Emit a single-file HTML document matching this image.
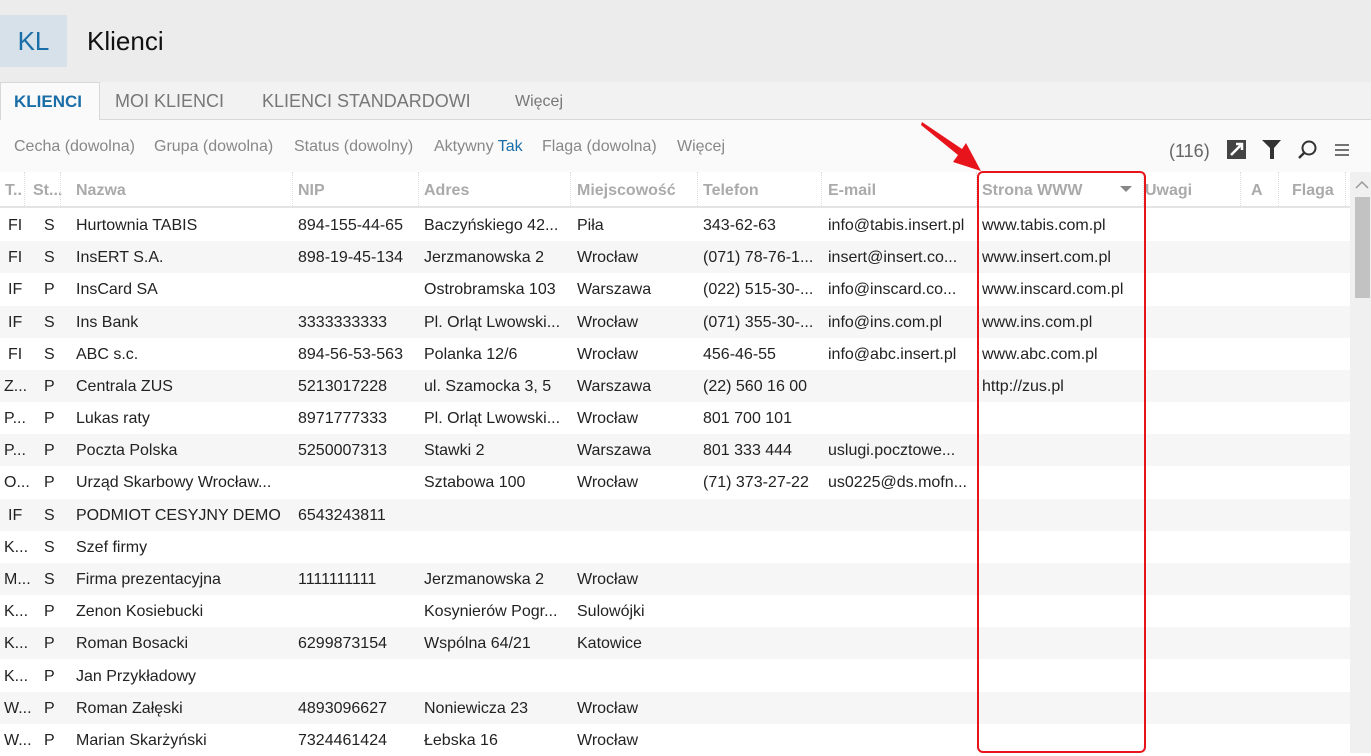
<!DOCTYPE html>
<html><head><meta charset="utf-8"><style>
body{margin:0;width:1371px;height:753px;overflow:hidden;background:#fff;font-family:"Liberation Sans",sans-serif;position:relative}
.top{position:absolute;left:0;top:0;width:1371px;height:82px;background:#ececec}
.kl{position:absolute;left:0;top:15px;width:67px;height:52px;background:#d7e1ea;color:#1a6ea8;font-size:26px;line-height:52px;text-align:center}
.title{position:absolute;left:87px;top:26px;font-size:26px;color:#111}
.tabs{position:absolute;left:0;top:82px;width:1371px;height:37px;background:#f2f2f2;border-bottom:1px solid #d8d8d8}
.tab{position:absolute;top:9px;font-size:18px;color:#777}
.tab.act{left:0;top:0;width:100px;height:38px;background:#fafafa;border:1px solid #d8d8d8;border-bottom:none;color:#1a6ea8;font-weight:bold;line-height:38px;padding-left:13px;box-sizing:border-box;font-size:17px}
.filt{position:absolute;left:0;top:120px;width:1371px;height:52px;background:#fafafa}
.filt span{position:absolute;top:18px;font-size:16px;color:#888}
.hdr{position:absolute;left:0;top:172px;width:1350px;height:34px;background:#fff;border-bottom:2px solid #e4e4e4}
.hdr div{position:absolute;top:10px;font-size:16px;color:#aaa;font-weight:bold}
.sep{position:absolute;top:172px;height:34px;border-left:1px dotted #ddd}
.row{position:absolute;left:0;width:1350px;height:32px}
.row.g{background:#f6f6f6}
.row div{position:absolute;top:8px;font-size:16px;color:#222;white-space:nowrap}
.sb{position:absolute;left:1350px;top:172px;width:21px;height:581px;background:#f0f0f0}
.thumb{position:absolute;left:1355px;top:197px;width:15px;height:101px;background:#c2c2c2}
.red{position:absolute;left:977px;top:171px;width:165px;height:578px;border:2px solid #e8141c;border-radius:6px}
</style></head><body>
<div class="top"><div class="kl">KL</div><div class="title">Klienci</div></div>
<div class="tabs">
<div class="tab act">KLIENCI</div>
<div class="tab" style="left:115px">MOI KLIENCI</div>
<div class="tab" style="left:262px">KLIENCI STANDARDOWI</div>
<div class="tab" style="left:515px;font-size:16px;top:11px">Więcej</div>
</div>
<div class="filt">
<span style="left:14px">Cecha (dowolna)</span>
<span style="left:154px">Grupa (dowolna)</span>
<span style="left:294px">Status (dowolny)</span>
<span style="left:434px">Aktywny <b style="font-weight:normal;color:#1a6ea8">Tak</b></span>
<span style="left:542px">Flaga (dowolna)</span>
<span style="left:677px">Więcej</span>
<span style="left:1169px;top:21px;font-size:18px;color:#666">(116)</span>
<svg style="position:absolute;left:1227px;top:20px" width="20" height="20"><rect x="0" y="0" width="19" height="19" fill="#444"/><path d="M4 15 L15 4 M9 4 H15 V10" stroke="#fff" stroke-width="2.5" fill="none"/></svg>
<svg style="position:absolute;left:1262px;top:20px" width="20" height="20"><path d="M0 0H19L12 8V19H8V8Z" fill="#333"/></svg>
<svg style="position:absolute;left:1297px;top:19px" width="22" height="22"><circle cx="12" cy="9" r="6.5" stroke="#333" stroke-width="2" fill="none"/><path d="M7.5 13.5L2 19" stroke="#333" stroke-width="2.5"/></svg>
<svg style="position:absolute;left:1335px;top:23px" width="16" height="14"><path d="M0 2H14M0 7H14M0 12H14" stroke="#444" stroke-width="1.6"/></svg>
</div>
<div class="hdr">
<div style="left:5px">T..</div><div style="left:33px">St...</div><div style="left:76px">Nazwa</div><div style="left:298px">NIP</div><div style="left:424px">Adres</div><div style="left:577px">Miejscowość</div><div style="left:703px">Telefon</div><div style="left:828px">E-mail</div><div style="left:982px">Strona WWW</div><div style="left:1145px">Uwagi</div><div style="left:1251px">A</div><div style="left:1292px">Flaga</div>
<svg style="position:absolute;left:1120px;top:14px" width="12" height="7"><path d="M0 0H12L6 6Z" fill="#888"/></svg>
</div>
<div class="sep" style="left:24px"></div><div class="sep" style="left:60px"></div><div class="sep" style="left:292px"></div><div class="sep" style="left:418px"></div><div class="sep" style="left:570px"></div><div class="sep" style="left:697px"></div><div class="sep" style="left:821px"></div><div class="sep" style="left:976px"></div><div class="sep" style="left:1143px"></div><div class="sep" style="left:1240px"></div><div class="sep" style="left:1278px"></div><div class="sep" style="left:1345px"></div>
<div class="row" style="top:209px"><div style="left:8px">FI</div><div style="left:44px">S</div><div style="left:76px">Hurtownia TABIS</div><div style="left:298px">894-155-44-65</div><div style="left:424px">Baczyńskiego 42...</div><div style="left:577px">Piła</div><div style="left:703px">343-62-63</div><div style="left:828px">info@tabis.insert.pl</div><div style="left:982px">www.tabis.com.pl</div></div>
<div class="row g" style="top:241px"><div style="left:8px">FI</div><div style="left:44px">S</div><div style="left:76px">InsERT S.A.</div><div style="left:298px">898-19-45-134</div><div style="left:424px">Jerzmanowska 2</div><div style="left:577px">Wrocław</div><div style="left:703px">(071) 78-76-1...</div><div style="left:828px">insert@insert.co...</div><div style="left:982px">www.insert.com.pl</div></div>
<div class="row" style="top:273px"><div style="left:8px">IF</div><div style="left:44px">P</div><div style="left:76px">InsCard SA</div><div style="left:424px">Ostrobramska 103</div><div style="left:577px">Warszawa</div><div style="left:703px">(022) 515-30-...</div><div style="left:828px">info@inscard.co...</div><div style="left:982px">www.inscard.com.pl</div></div>
<div class="row g" style="top:306px"><div style="left:8px">IF</div><div style="left:44px">S</div><div style="left:76px">Ins Bank</div><div style="left:298px">3333333333</div><div style="left:424px">Pl. Orląt Lwowski...</div><div style="left:577px">Wrocław</div><div style="left:703px">(071) 355-30-...</div><div style="left:828px">info@ins.com.pl</div><div style="left:982px">www.ins.com.pl</div></div>
<div class="row" style="top:338px"><div style="left:8px">FI</div><div style="left:44px">S</div><div style="left:76px">ABC s.c.</div><div style="left:298px">894-56-53-563</div><div style="left:424px">Polanka  12/6</div><div style="left:577px">Wrocław</div><div style="left:703px">456-46-55</div><div style="left:828px">info@abc.insert.pl</div><div style="left:982px">www.abc.com.pl</div></div>
<div class="row g" style="top:370px"><div style="left:4px">Z...</div><div style="left:44px">P</div><div style="left:76px">Centrala ZUS</div><div style="left:298px">5213017228</div><div style="left:424px">ul. Szamocka 3, 5</div><div style="left:577px">Warszawa</div><div style="left:703px">(22) 560 16 00</div><div style="left:982px">http://zus.pl</div></div>
<div class="row" style="top:402px"><div style="left:4px">P...</div><div style="left:44px">P</div><div style="left:76px">Lukas raty</div><div style="left:298px">8971777333</div><div style="left:424px">Pl. Orląt Lwowski...</div><div style="left:577px">Wrocław</div><div style="left:703px">801 700 101</div></div>
<div class="row g" style="top:434px"><div style="left:4px">P...</div><div style="left:44px">P</div><div style="left:76px">Poczta Polska</div><div style="left:298px">5250007313</div><div style="left:424px">Stawki 2</div><div style="left:577px">Warszawa</div><div style="left:703px">801 333 444</div><div style="left:828px">uslugi.pocztowe...</div></div>
<div class="row" style="top:466px"><div style="left:4px">O...</div><div style="left:44px">P</div><div style="left:76px">Urząd Skarbowy Wrocław...</div><div style="left:424px">Sztabowa 100</div><div style="left:577px">Wrocław</div><div style="left:703px">(71) 373-27-22</div><div style="left:828px">us0225@ds.mofn...</div></div>
<div class="row g" style="top:499px"><div style="left:8px">IF</div><div style="left:44px">S</div><div style="left:76px">PODMIOT CESYJNY DEMO</div><div style="left:298px">6543243811</div></div>
<div class="row" style="top:531px"><div style="left:4px">K...</div><div style="left:44px">S</div><div style="left:76px">Szef firmy</div></div>
<div class="row g" style="top:563px"><div style="left:4px">M...</div><div style="left:44px">S</div><div style="left:76px">Firma prezentacyjna</div><div style="left:298px">1111111111</div><div style="left:424px">Jerzmanowska 2</div><div style="left:577px">Wrocław</div></div>
<div class="row" style="top:595px"><div style="left:4px">K...</div><div style="left:44px">P</div><div style="left:76px">Zenon Kosiebucki</div><div style="left:424px">Kosynierów Pogr...</div><div style="left:577px">Sulowójki</div></div>
<div class="row g" style="top:627px"><div style="left:4px">K...</div><div style="left:44px">P</div><div style="left:76px">Roman Bosacki</div><div style="left:298px">6299873154</div><div style="left:424px">Wspólna 64/21</div><div style="left:577px">Katowice</div></div>
<div class="row" style="top:660px"><div style="left:4px">K...</div><div style="left:44px">P</div><div style="left:76px">Jan Przykładowy</div></div>
<div class="row g" style="top:692px"><div style="left:4px">W...</div><div style="left:44px">P</div><div style="left:76px">Roman Załęski</div><div style="left:298px">4893096627</div><div style="left:424px">Noniewicza 23</div><div style="left:577px">Wrocław</div></div>
<div class="row" style="top:724px"><div style="left:4px">W...</div><div style="left:44px">P</div><div style="left:76px">Marian Skarżyński</div><div style="left:298px">7324461424</div><div style="left:424px">Łebska 16</div><div style="left:577px">Wrocław</div></div>
<div class="sb"></div><div class="thumb"></div>
<svg style="position:absolute;left:1355px;top:180px" width="14" height="9"><path d="M1 8L7 2L13 8" stroke="#999" stroke-width="1.5" fill="none"/></svg>
<div class="red"></div>
<svg style="position:absolute;left:915px;top:118px" width="75" height="60"><path d="M7 4 L47 31 L51 25 L66 53 L38 44 L43 37 L6 7Z" fill="#e8141c"/></svg>
</body></html>
